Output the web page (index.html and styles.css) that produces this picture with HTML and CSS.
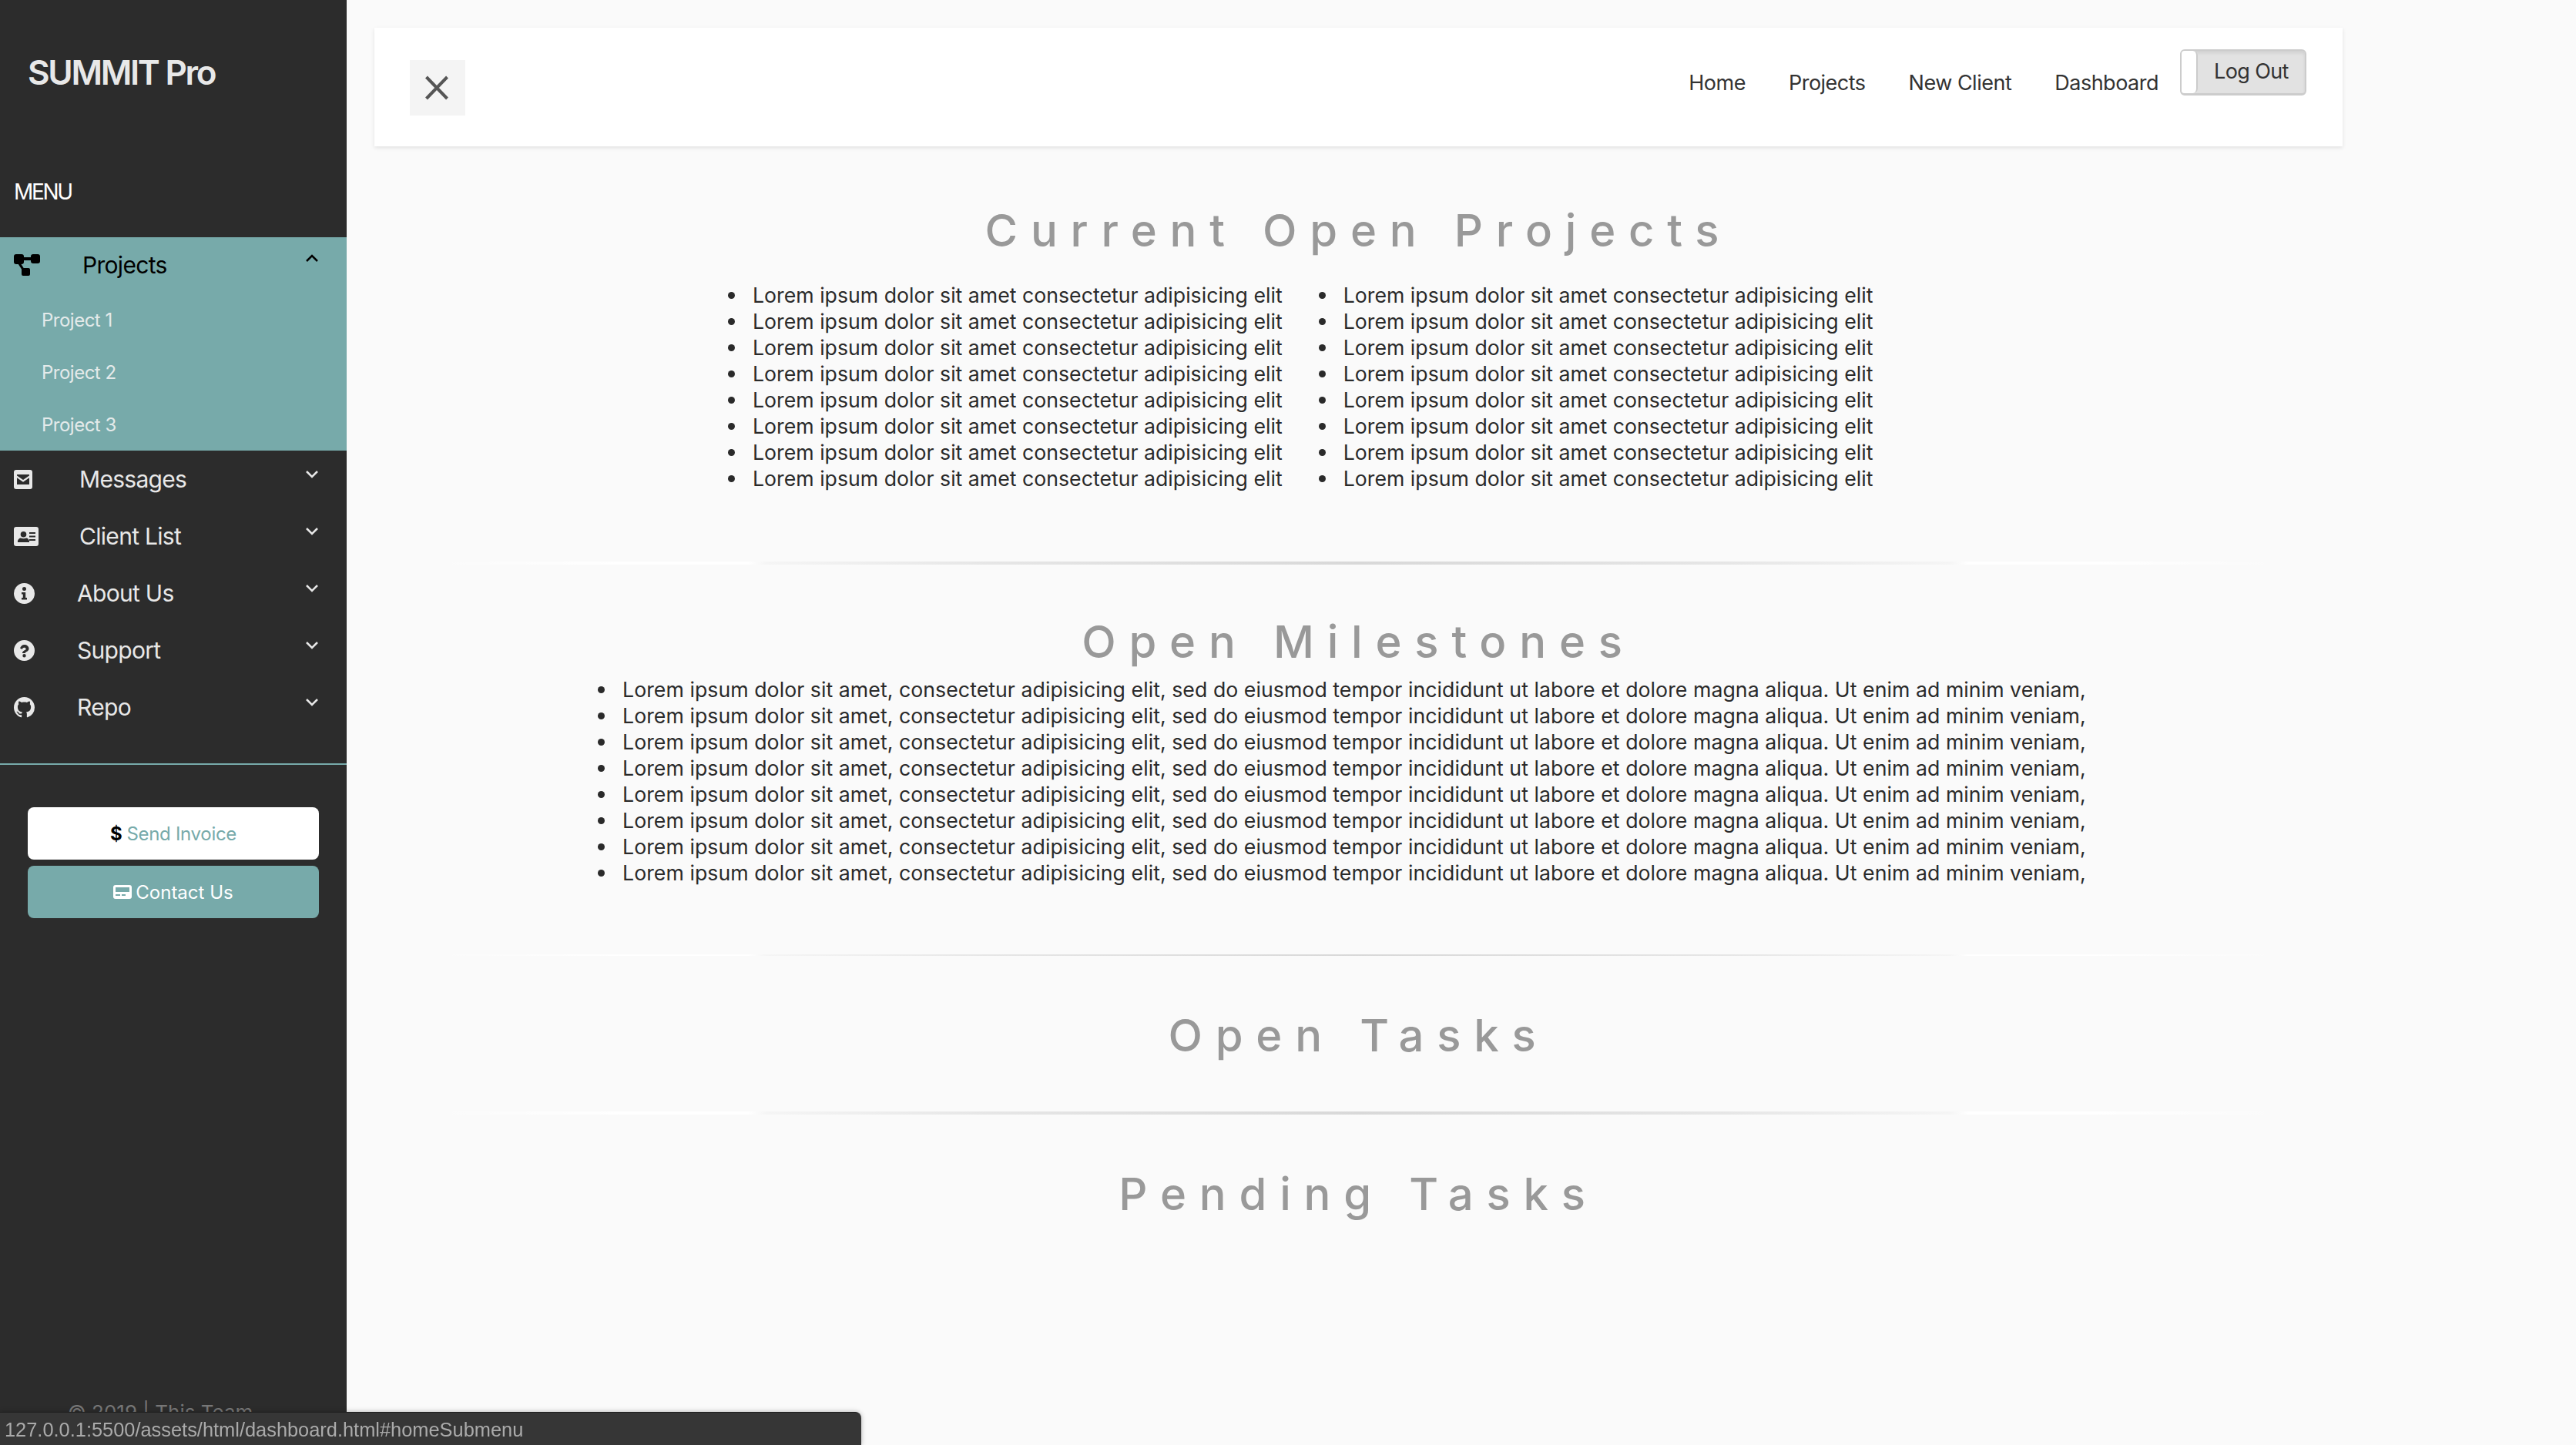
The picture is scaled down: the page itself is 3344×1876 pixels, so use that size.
FILE: index.html
```html
<!DOCTYPE html>
<html lang="en">
<head>
    <meta charset="utf-8">
    <title>SUMMIT Pro</title>
    <link rel="stylesheet" href="styles.css">
</head>
<body>
<div class="wrapper">
    <nav id="sidebar">
        <h3 class="brand">SUMMIT Pro</h3>
        <p class="menu-label">MENU</p>
        <ul class="side-menu">
            <li class="open">
                <a class="side-link" href="#homeSubmenu">
                    <svg class="ic ic-project" viewBox="0 0 34 28"><path d="M3 0h7a3 3 0 0 1 3 3v1h9V3a3 3 0 0 1 3-3h6a3 3 0 0 1 3 3v6a3 3 0 0 1-3 3h-6a3 3 0 0 1-3-3V8h-9v2a3 3 0 0 1-3 3H9.500l3.200 5H19a2 2 0 0 1 2 2v6a2 2 0 0 1-2 2h-7a2 2 0 0 1-2-2v-6.500L5.800 13H3a3 3 0 0 1-3-3V3a3 3 0 0 1 3-3z"/></svg>
                    <span>Projects</span>
                    <svg class="caret" viewBox="0 0 16 10"><path d="M1 9l7-7 7 7"/></svg>
                </a>
                <ul class="sub-menu">
                    <li><a href="#">Project 1</a></li>
                    <li><a href="#">Project 2</a></li>
                    <li><a href="#">Project 3</a></li>
                </ul>
            </li>
            <li>
                <a class="side-link" href="#">
                    <svg class="ic ic-mail" viewBox="0 0 24 25"><path fill-rule="evenodd" d="M3 0h18a3 3 0 0 1 3 3v19a3 3 0 0 1-3 3H3a3 3 0 0 1-3-3V3a3 3 0 0 1 3-3zm1 6v1.500l8 5.500 8-5.500V6zm0 4.300V19h16v-8.700l-8 5.500z"/></svg>
                    <span>Messages</span>
                    <svg class="caret" viewBox="0 0 16 10"><path d="M1 1l7 7 7-7"/></svg>
                </a>
            </li>
            <li>
                <a class="side-link" href="#">
                    <svg class="ic ic-card" viewBox="0 0 32 25"><path fill-rule="evenodd" d="M3 0h26a3 3 0 0 1 3 3v19a3 3 0 0 1-3 3H3a3 3 0 0 1-3-3V3a3 3 0 0 1 3-3zm9.500 6a3.800 3.800 0 1 0 0 7.600 3.800 3.800 0 0 0 0-7.600zM5 20h15c.6-3.500-2.500-5.500-4-5.500-1 .5-2.200.8-3.500.8s-2.500-.3-3.500-.8C7.500 14.500 4.400 16.500 5 20zM20 7v2h8V7zm0 4.500v2h8v-2zm0 4.500v2h8v-2z"/></svg>
                    <span>Client List</span>
                    <svg class="caret" viewBox="0 0 16 10"><path d="M1 1l7 7 7-7"/></svg>
                </a>
            </li>
            <li>
                <a class="side-link" href="#">
                    <svg class="ic" viewBox="0 0 27 27"><path fill-rule="evenodd" d="M13.500 0a13.500 13.500 0 1 1 0 27 13.500 13.500 0 0 1 0-27zm0 5a2.500 2.500 0 1 0 0 5 2.500 2.500 0 0 0 0-5zM10 12v2.500h1.800V19H10v2.500h7V19h-1.800v-7z"/></svg>
                    <span>About Us</span>
                    <svg class="caret" viewBox="0 0 16 10"><path d="M1 1l7 7 7-7"/></svg>
                </a>
            </li>
            <li>
                <a class="side-link" href="#">
                    <svg class="ic" viewBox="0 0 27 27"><path fill-rule="evenodd" d="M13.500 0a13.500 13.500 0 1 1 0 27 13.500 13.500 0 0 1 0-27zM8 10.500l2.800 1.500c.5-1.300 1.300-2.200 2.700-2.200 1.200 0 2.100.7 2.100 1.600 0 1-1 1.400-2.200 2-1.400.8-2.400 1.700-2.400 3.600h3.800c0-1 .7-1.400 1.800-2 1.500-.8 2.900-1.900 2.900-3.800C19.500 8 16.800 6 13.500 6 11 6 9.100 7.800 8 10.500zM13.500 18a2.200 2.200 0 1 0 0 4.400 2.200 2.200 0 0 0 0-4.400z"/></svg>
                    <span>Support</span>
                    <svg class="caret" viewBox="0 0 16 10"><path d="M1 1l7 7 7-7"/></svg>
                </a>
            </li>
            <li>
                <a class="side-link" href="#">
                    <svg class="ic" viewBox="0 0 16 16"><path d="M8 0C3.580 0 0 3.580 0 8c0 3.540 2.290 6.530 5.470 7.590.4.070.55-.17.55-.38 0-.19-.01-.82-.01-1.490-2.010.37-2.530-.49-2.690-.94-.09-.23-.48-.94-.82-1.130-.28-.15-.68-.52-.01-.53.63-.01 1.080.58 1.230.82.72 1.210 1.870.87 2.330.66.07-.52.28-.87.51-1.070-1.780-.2-3.640-.89-3.640-3.950 0-.87.31-1.590.82-2.150-.08-.2-.36-1.020.08-2.120 0 0 .67-.21 2.200.82.64-.18 1.320-.27 2-.27.68 0 1.360.09 2 .27 1.530-1.040 2.200-.82 2.200-.82.44 1.100.16 1.920.08 2.120.51.56.82 1.270.82 2.150 0 3.070-1.870 3.750-3.650 3.950.29.25.54.73.54 1.480 0 1.070-.01 1.930-.01 2.200 0 .21.15.46.55.38A8.013 8.013 0 0 0 16 8c0-4.420-3.580-8-8-8z"/></svg>
                    <span>Repo</span>
                    <svg class="caret" viewBox="0 0 16 10"><path d="M1 1l7 7 7-7"/></svg>
                </a>
            </li>
        </ul>
        <div class="cta">
            <a class="cta-btn cta-invoice" href="#"><b>$</b> Send Invoice</a>
            <a class="cta-btn cta-contact" href="#">
                <svg class="ic-pager" viewBox="0 0 24 18"><path fill-rule="evenodd" d="M3 0h18a3 3 0 0 1 3 3v12a3 3 0 0 1-3 3H3a3 3 0 0 1-3-3V3a3 3 0 0 1 3-3zm0 3v6h18V3zm0 9v2h6v-2zm8 0v2h5v-2z"/></svg>
                Contact Us
            </a>
        </div>
        <p class="footer">© 2019 | This Team</p>
    </nav>

    <main id="content">
        <header class="topbar">
            <button class="toggle" type="button">
                <svg viewBox="0 0 30 32"><path d="M1.500 2l27 28M28.500 2l-27 28"/></svg>
            </button>
            <ul class="top-links">
                <li><a href="#">Home</a></li>
                <li><a href="#">Projects</a></li>
                <li><a href="#">New Client</a></li>
                <li><a href="#">Dashboard</a></li>
            </ul>
            <button class="logout" type="button"><span class="logout-stub"></span><span class="logout-text">Log Out</span></button>
        </header>

        <section class="block block-projects">
            <h2>Current Open Projects</h2>
            <div class="two-col">
                <ul class="lorem">
                    <li>Lorem ipsum dolor sit amet consectetur adipisicing elit</li>
                    <li>Lorem ipsum dolor sit amet consectetur adipisicing elit</li>
                    <li>Lorem ipsum dolor sit amet consectetur adipisicing elit</li>
                    <li>Lorem ipsum dolor sit amet consectetur adipisicing elit</li>
                    <li>Lorem ipsum dolor sit amet consectetur adipisicing elit</li>
                    <li>Lorem ipsum dolor sit amet consectetur adipisicing elit</li>
                    <li>Lorem ipsum dolor sit amet consectetur adipisicing elit</li>
                    <li>Lorem ipsum dolor sit amet consectetur adipisicing elit</li>
                </ul>
                <ul class="lorem">
                    <li>Lorem ipsum dolor sit amet consectetur adipisicing elit</li>
                    <li>Lorem ipsum dolor sit amet consectetur adipisicing elit</li>
                    <li>Lorem ipsum dolor sit amet consectetur adipisicing elit</li>
                    <li>Lorem ipsum dolor sit amet consectetur adipisicing elit</li>
                    <li>Lorem ipsum dolor sit amet consectetur adipisicing elit</li>
                    <li>Lorem ipsum dolor sit amet consectetur adipisicing elit</li>
                    <li>Lorem ipsum dolor sit amet consectetur adipisicing elit</li>
                    <li>Lorem ipsum dolor sit amet consectetur adipisicing elit</li>
                </ul>
            </div>
        </section>
        <div class="line line-one"></div>

        <section class="block block-milestones">
            <h2>Open Milestones</h2>
            <ul class="lorem lorem-long">
                <li>Lorem ipsum dolor sit amet, consectetur adipisicing elit, sed do eiusmod tempor incididunt ut labore et dolore magna aliqua. Ut enim ad minim veniam,</li>
                <li>Lorem ipsum dolor sit amet, consectetur adipisicing elit, sed do eiusmod tempor incididunt ut labore et dolore magna aliqua. Ut enim ad minim veniam,</li>
                <li>Lorem ipsum dolor sit amet, consectetur adipisicing elit, sed do eiusmod tempor incididunt ut labore et dolore magna aliqua. Ut enim ad minim veniam,</li>
                <li>Lorem ipsum dolor sit amet, consectetur adipisicing elit, sed do eiusmod tempor incididunt ut labore et dolore magna aliqua. Ut enim ad minim veniam,</li>
                <li>Lorem ipsum dolor sit amet, consectetur adipisicing elit, sed do eiusmod tempor incididunt ut labore et dolore magna aliqua. Ut enim ad minim veniam,</li>
                <li>Lorem ipsum dolor sit amet, consectetur adipisicing elit, sed do eiusmod tempor incididunt ut labore et dolore magna aliqua. Ut enim ad minim veniam,</li>
                <li>Lorem ipsum dolor sit amet, consectetur adipisicing elit, sed do eiusmod tempor incididunt ut labore et dolore magna aliqua. Ut enim ad minim veniam,</li>
                <li>Lorem ipsum dolor sit amet, consectetur adipisicing elit, sed do eiusmod tempor incididunt ut labore et dolore magna aliqua. Ut enim ad minim veniam,</li>
            </ul>
        </section>
        <div class="line line-two"></div>

        <section class="block block-tasks">
            <h2>Open Tasks</h2>
        </section>
        <div class="line line-three"></div>

        <section class="block block-pending">
            <h2>Pending Tasks</h2>
        </section>
    </main>
</div>
<div class="status-bubble">127.0.0.1:5500/assets/html/dashboard.html#homeSubmenu</div>
</body>
</html>
```
FILE: styles.css
```css
* {
    box-sizing: border-box;
}
html, body {
    margin: 0;
    padding: 0;
    height: 100%;
}
body {
    background: #fafafa;
    font-family: "Inter", "Open Sans", sans-serif;
    overflow: hidden;
}
a {
    color: inherit;
    text-decoration: none;
}
ul {
    list-style: none;
    margin: 0;
    padding: 0;
}
.wrapper {
    display: flex;
    height: 1876px;
}

/* sidebar */
#sidebar {
    width: 450px;
    flex: none;
    height: 100%;
    background: #2c2c2c;
    color: #e8e8e8;
    display: flex;
    flex-direction: column;
    overflow: hidden;
}
.brand {
    margin: 0;
    padding: 70px 0 0 36px;
    height: 232px;
    font-size: 44px;
    line-height: 48px;
    font-weight: 600;
    letter-spacing: -2.300px;
}
.menu-label {
    margin: 0;
    padding-left: 18px;
    height: 76px;
    font-size: 28px;
    line-height: 34px;
    color: #fff;
    letter-spacing: -2.300px;
}
.side-link {
    display: flex;
    align-items: center;
    height: 74px;
    padding-left: 18px;
    font-size: 30px;
    letter-spacing: -0.700px;
    position: relative;
}
.side-link span {
    margin-left: 55px;
}
.ic {
    width: 27px;
    height: 27px;
    fill: #e8e8e8;
    flex: none;
}
.ic-mail {
    width: 24px;
    height: 25px;
}
.ic-mail + span {
    margin-left: 61px;
}
.ic-card {
    width: 32px;
    height: 25px;
}
.ic-card + span {
    margin-left: 53px;
}
.caret {
    position: absolute;
    left: 397px;
    top: 26px;
    width: 16px;
    height: 10px;
    fill: none;
    stroke: #e8e8e8;
    stroke-width: 2.500;
}
.open {
    background: #77aaaa;
    color: #000;
    height: 277px;
}
.open .side-link {
    height: 72px;
}
.open .ic {
    fill: #000;
    width: 34px;
    height: 28px;
}
.open .caret {
    stroke: #000;
    top: 22px;
}
.sub-menu a {
    display: block;
    height: 68px;
    line-height: 68px;
    padding-left: 54px;
    font-size: 24px;
    letter-spacing: -0.500px;
    color: #e4eaea;
}
.sub-menu {
    margin-top: 2px;
}
.side-menu {
    padding-bottom: 36px;
    border-bottom: 2px solid #77aaaa;
}
.cta {
    padding: 55px 36px 0;
    display: flex;
    flex-direction: column;
    gap: 8px;
}
.cta-btn {
    height: 68px;
    border-radius: 8px;
    display: flex;
    align-items: center;
    justify-content: center;
    font-size: 24px;
}
.cta-invoice {
    background: #fff;
    color: #77aaaa;
    gap: 6px;
    letter-spacing: -0.300px;
}
.cta-invoice b {
    color: #000;
}
.cta-contact {
    background: #77aaaa;
    color: #fff;
    gap: 5px;
}
.ic-pager {
    width: 24px;
    height: 18px;
    fill: #fff;
}
.footer {
    margin: auto 0 0;
    padding: 0 0 26px 88px;
    font-size: 26px;
    line-height: 32px;
    color: #777;
}

/* main */
#content {
    width: 2555px;
    margin-left: 36px;
    padding-top: 36px;
}
.topbar {
    height: 154px;
    background: #fff;
    box-shadow: 0 2px 5px rgba(0, 0, 0, 0.1);
    display: flex;
    align-items: flex-start;
    padding: 28px 47px 0 46px;
}
.toggle {
    width: 72px;
    height: 72px;
    margin-top: 14px;
    background: #f4f4f4;
    border: none;
    padding: 0 2px 0 0;
    display: flex;
    align-items: center;
    justify-content: center;
}
.toggle svg {
    width: 30px;
    height: 32px;
    fill: none;
    stroke: #555;
    stroke-width: 4;
}
.top-links {
    margin-left: auto;
    display: flex;
    gap: 56px;
    height: 86px;
    align-items: center;
    font-size: 27px;
    letter-spacing: -0.500px;
    color: #333;
}
.logout {
    margin-left: 28px;
    width: 164px;
    height: 60px;
    padding: 0;
    border: 2px solid #ccc;
    border-radius: 6px;
    background: #e2e2e2;
    box-shadow: inset 0 3px 4px rgba(0, 0, 0, 0.08);
    display: flex;
    color: #333;
    font-family: inherit;
    font-size: 27px;
    letter-spacing: -0.600px;
    overflow: hidden;
    border-bottom-width: 3px;
}
.logout-stub {
    width: 21px;
    background: #fff;
    border-right: 2px solid #ccc;
    border-radius: 0 6px 6px 0;
    flex: none;
}
.logout-text {
    padding: 10px 0 0 21px;
}
.block h2 {
    margin: 0;
    text-align: center;
    font-size: 58px;
    line-height: 70px;
    font-weight: 500;
    letter-spacing: 16.800px;
    color: #999;
}
.block-projects {
    padding-top: 74px;
}
.two-col {
    display: flex;
    margin-top: 32px;
    padding-left: 491px;
    gap: 79px;
}
.lorem {
    font-size: 26.700px;
    line-height: 34px;
    color: #2a2a2a;
}
.lorem li {
    display: flex;
    align-items: center;
    white-space: nowrap;
}
.lorem li::before {
    content: "";
    flex: none;
    width: 9px;
    height: 9px;
    margin: 0 23px 0 -32px;
    border-radius: 50%;
    background: #2a2a2a;
}
.lorem-long {
    margin-top: 10px;
    padding-left: 322px;
    letter-spacing: 0.045px;
}
.line {
    height: 4px;
    width: 2400px;
    margin-left: 77px;
    background: linear-gradient(to right, rgba(255,255,255,0), #fff 10%, #fff 17%, #f5f5f5 18%, #e6e6e6 30%, #d8d8d8 50%, #e6e6e6 70%, #f5f5f5 82%, #fff 83%, #fff 90%, rgba(255,255,255,0));
}
.line-one {
    margin-top: 91px;
}
.block-milestones {
    padding-top: 65px;
}
.line-two {
    height: 2px;
    margin-top: 89px;
}
.block-tasks {
    padding-top: 68px;
}
.line-three {
    margin-top: 64px;
}
.block-pending {
    padding-top: 68px;
}

/* browser link preview at the bottom */
.status-bubble {
    position: fixed;
    left: 0;
    bottom: 0;
    width: 1118px;
    height: 43px;
    padding: 8px 0 0 6px;
    background: #363636;
    border-top: 1px solid #1f1f1f;
    border-radius: 0 8px 0 0;
    box-shadow: 0 0 6px rgba(0, 0, 0, 0.3);
    color: #aaa;
    font-family: "Liberation Sans", Arial, sans-serif;
    font-size: 25.400px;
    line-height: 28px;
}
```
